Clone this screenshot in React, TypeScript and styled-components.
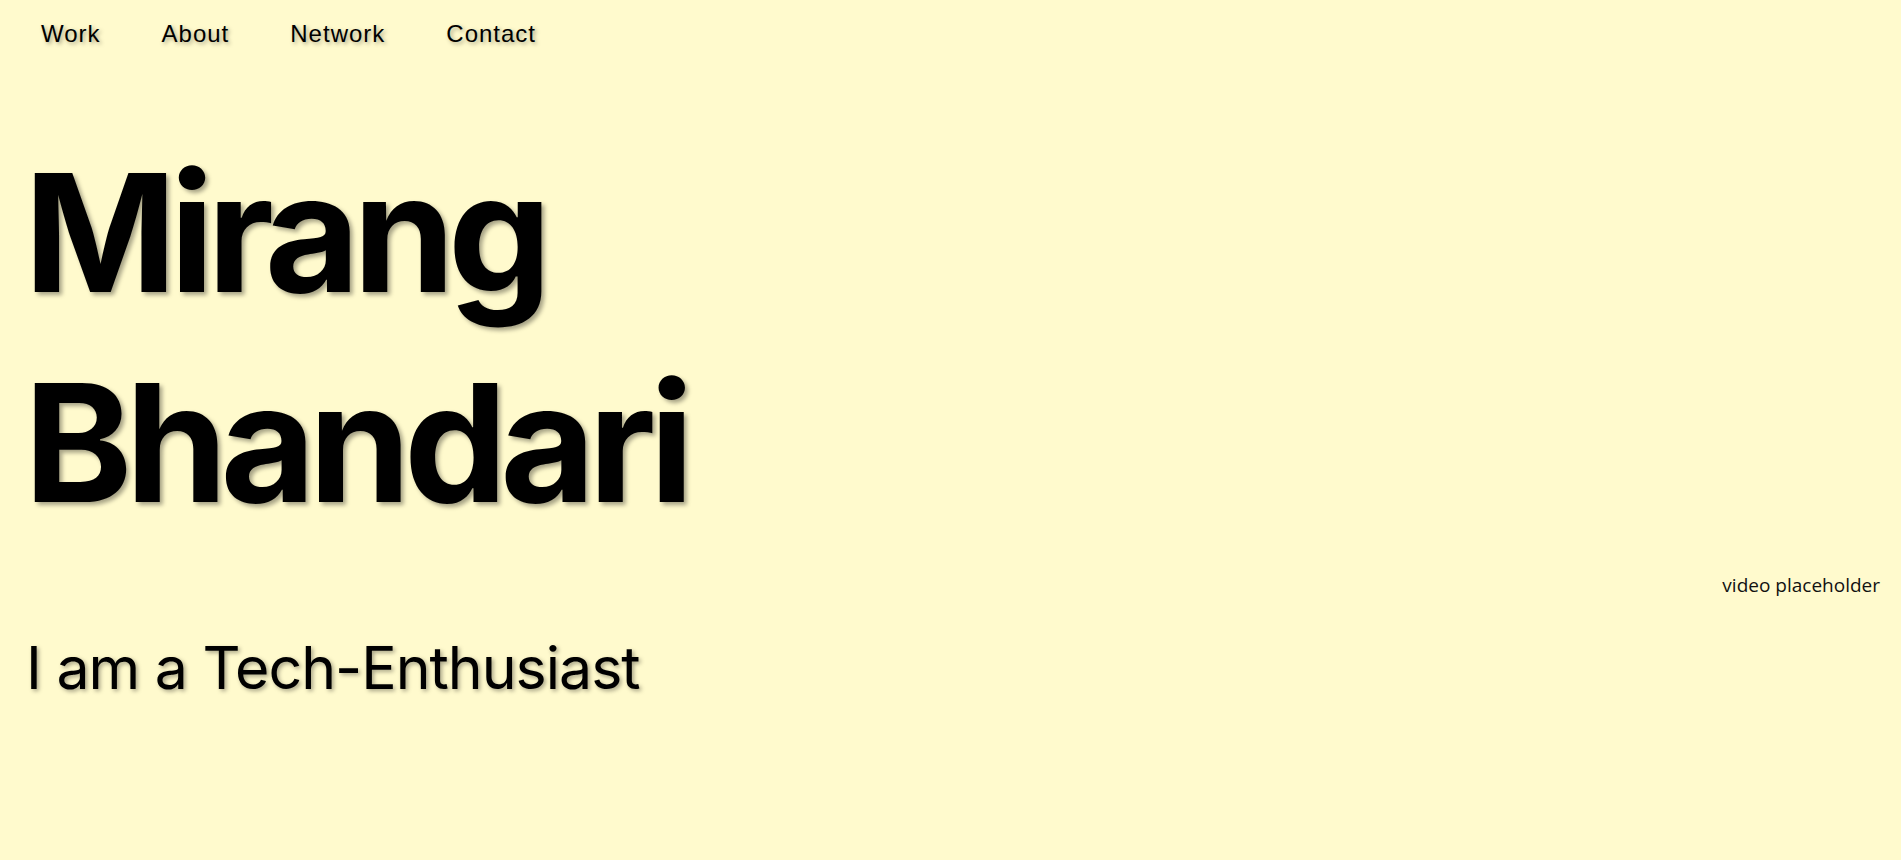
import React from "react";
import styled, { createGlobalStyle } from "styled-components";

const GlobalStyle = createGlobalStyle`
  html, body {
    margin: 0;
    padding: 0;
    background: #fffacd;
  }
  body {
    font-family: "Liberation Sans", Arial, sans-serif;
    color: #000;
  }
`;

const Page = styled.div`
  min-height: 860px;
  background: #fffacd;
`;

const Nav = styled.nav`
  display: flex;
  align-items: center;
  gap: 61px;
  padding: 20px 0 0 41px;
`;

const NavLink = styled.a`
  font-family: "Liberation Sans", Arial, sans-serif;
  font-size: 24px;
  line-height: 28px;
  letter-spacing: 1px;
  color: #000;
  text-decoration: none;
  text-shadow: 2px 2px 4px rgba(0, 0, 0, 0.35);
  cursor: pointer;
`;

const Hero = styled.section`
  display: flex;
  flex-direction: column;
  padding: 0 21px 0 24px;
`;

const Name = styled.h1`
  margin: 80px 0 0;
  font-family: Inter, "Liberation Sans", sans-serif;
  font-weight: 700;
  font-size: 164px;
  line-height: 210px;
  letter-spacing: -7px;
  text-shadow: 3px 3px 4px rgba(0, 0, 0, 0.35);
`;

const NameLine = styled.span`
  display: block;
`;

const VideoSlot = styled.div`
  align-self: flex-end;
  margin-top: 25px;
  font-family: "Open Sans", "Noto Sans", sans-serif;
  font-size: 19px;
  line-height: 24px;
  color: #111;
`;

const Tagline = styled.p`
  margin: 38px 0 0 2px;
  font-family: Inter, "Liberation Sans", sans-serif;
  font-weight: 400;
  font-size: 59px;
  line-height: 66px;
  letter-spacing: -1px;
  text-shadow: 2px 2px 4px rgba(0, 0, 0, 0.35);
`;

const links = ["Work", "About", "Network", "Contact"];

export default function App() {
  return (
    <Page>
      <GlobalStyle />
      <Nav>
        {links.map((l) => (
          <NavLink key={l}>{l}</NavLink>
        ))}
      </Nav>
      <Hero>
        <Name>
          <NameLine>Mirang</NameLine>
          <NameLine>Bhandari</NameLine>
        </Name>
        <VideoSlot>video placeholder</VideoSlot>
        <Tagline>I am a Tech-Enthusiast</Tagline>
      </Hero>
    </Page>
  );
}
